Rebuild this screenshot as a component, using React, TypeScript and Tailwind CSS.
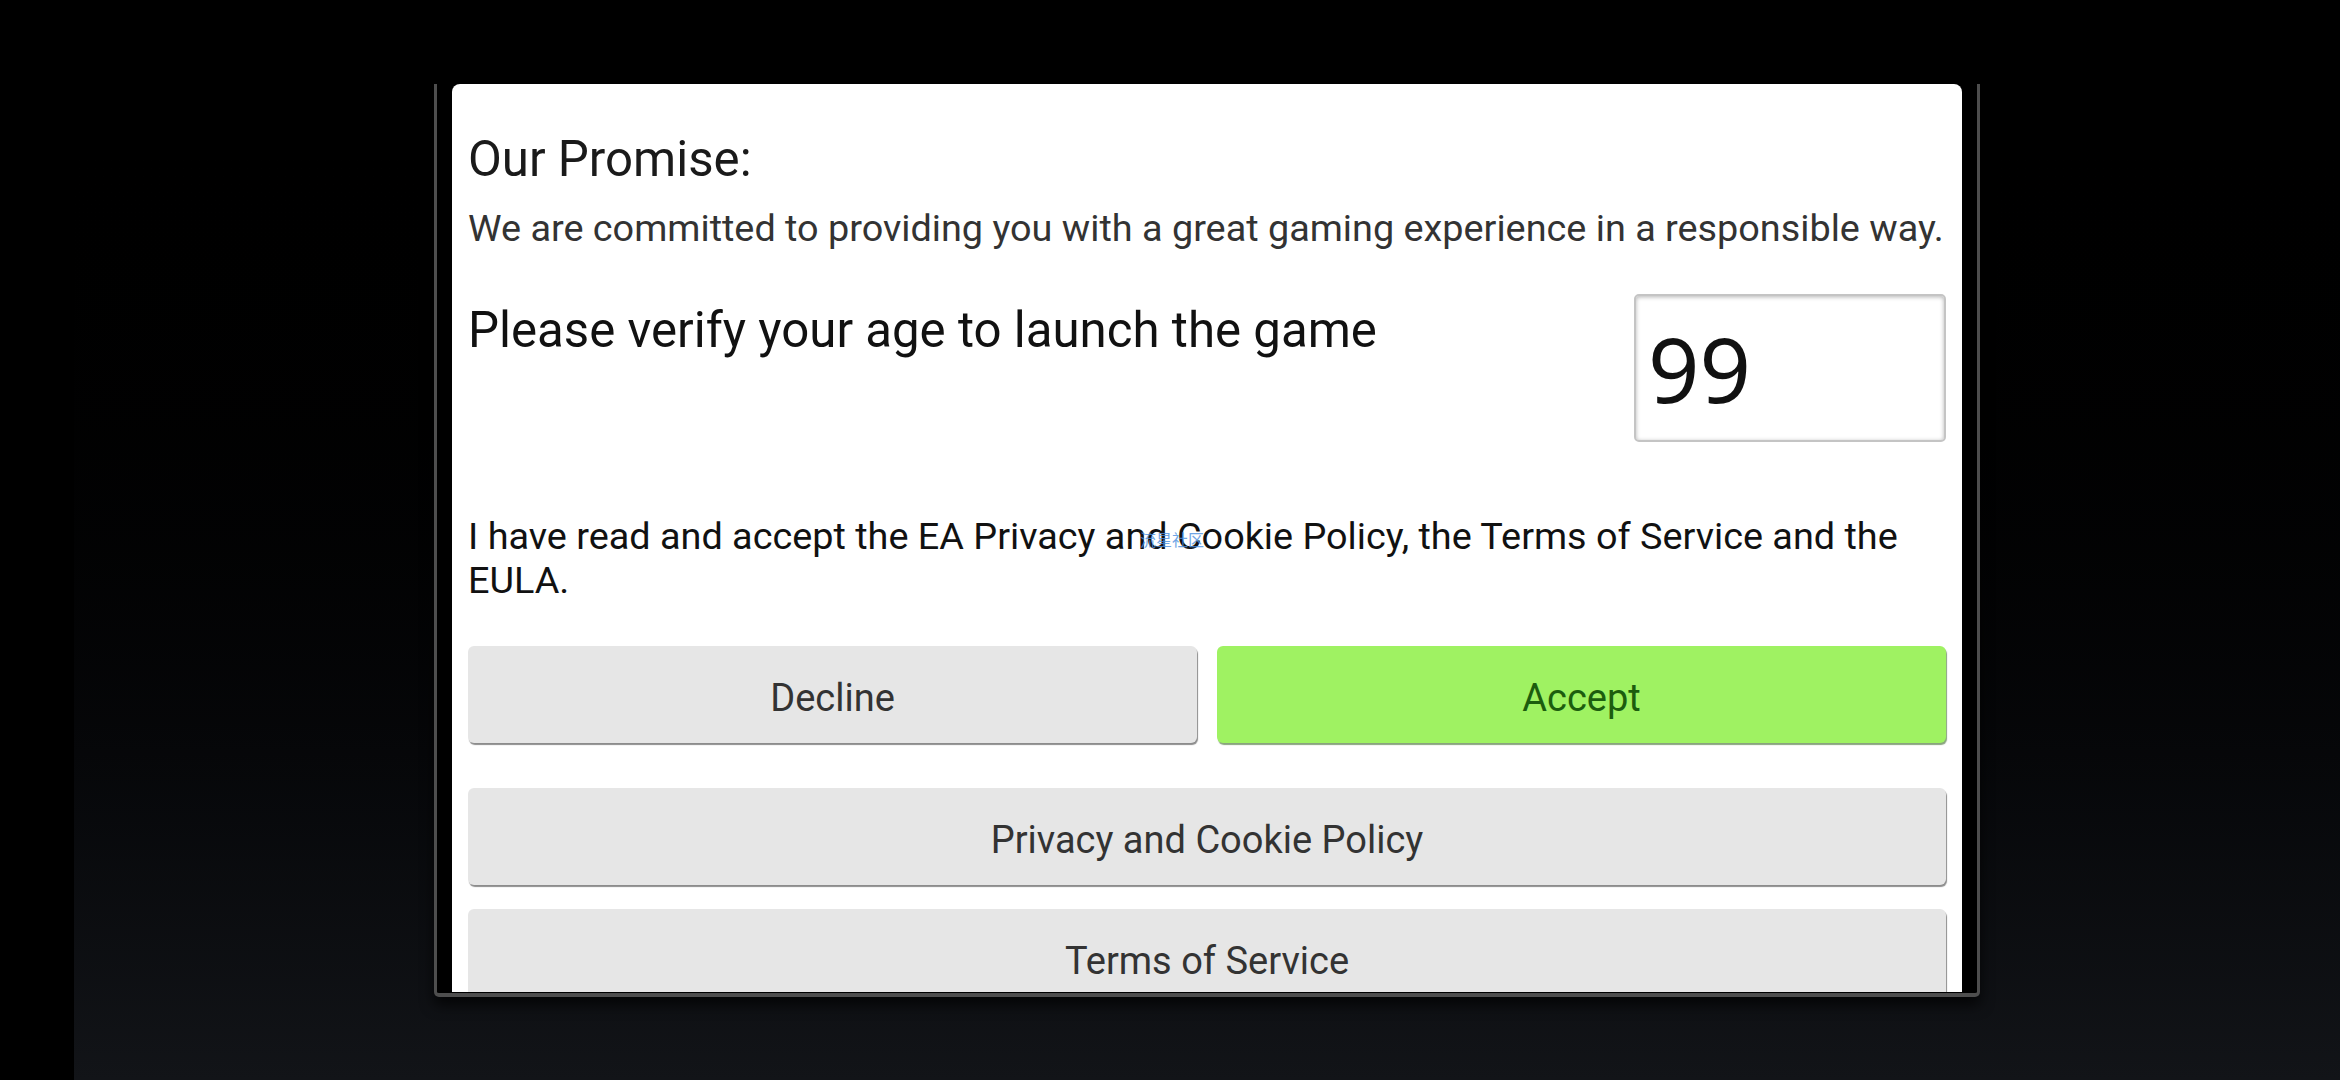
import type { ReactNode } from 'react';

const roboto = { fontFamily: 'Roboto, "Noto Sans", Arial, sans-serif' };

function GrayButton({ children, className = '' }: { children: ReactNode; className?: string }) {
  return (
    <button
      className={`h-[97px] w-full flex items-center justify-center pt-[8px] rounded-[6px] bg-[#e6e6e6] text-[#333333] text-[38px] shadow-[1px_2px_1px_rgba(0,0,0,0.45)] ${className}`}
    >
      {children}
    </button>
  );
}

export default function App() {
  return (
    <div className="w-[2340px] h-[1080px] flex bg-black overflow-hidden" style={roboto}>
      <div className="w-[74px] h-full bg-black" />

      <div className="flex-1 h-full flex justify-center pt-[84px] bg-linear-to-b from-black from-[8%] to-[#121418]">
        {/* Frame */}
        <div className="w-[1546px] h-[913px] bg-black border-x-[3px] border-b-[4px] border-[#4e4e4e] rounded-b-[5px] px-[15px] shadow-[0_8px_14px_rgba(0,0,0,0.7)]">
          <div className="relative h-[908px] bg-white rounded-t-[8px] overflow-hidden px-[16px] pt-[47px] shadow-[0_0_2px_rgba(0,0,0,0.5)]">
            <h1 className="text-[49.2px] leading-[56px] text-[#1a1a1a]">Our Promise:</h1>
            <p className="mt-[21px] text-[37.8px] leading-[40px] text-[#333333] whitespace-nowrap">
              We are committed to providing you with a great gaming experience in a responsible way.
            </p>

            <div className="mt-[46px] flex items-start justify-between">
              <h2 className="mt-[8px] text-[49.2px] leading-[56px] text-[#111111]">
                Please verify your age to launch the game
              </h2>
              <div className="w-[312px] h-[148px] flex items-center rounded-[5px] border-2 border-[#c4c4c4] bg-white px-[12px] shadow-[inset_0_1px_4px_rgba(0,0,0,0.3)]">
                <span
                  className="text-[90px] leading-[90px] text-[#111111]"
                  style={{ fontFamily: '"Noto Sans", "Open Sans", sans-serif' }}
                >
                  99
                </span>
              </div>
            </div>

            <p className="mt-[72px] text-[37.8px] leading-[44px] text-[#111111]">
              I have read and accept the EA Privacy and Cookie Policy, the Terms of Service and the EULA.
            </p>

            <div className="mt-[44px] grid grid-cols-2 gap-[20px]">
              <GrayButton>Decline</GrayButton>
              <button className="h-[97px] w-full flex items-center justify-center pt-[8px] rounded-[6px] bg-[#9ff262] text-[#1c5d0e] text-[38px] shadow-[1px_2px_1px_rgba(40,90,20,0.55)]">
                Accept
              </button>
            </div>

            <GrayButton className="mt-[45px]">Privacy and Cookie Policy</GrayButton>
            <GrayButton className="mt-[24px]">Terms of Service</GrayButton>

            {/* watermark */}
            <span
              className="absolute left-[688px] top-[447px] text-[16px] leading-[16px] text-[#4a8fe0] opacity-80"
              style={{ fontFamily: '"Noto Sans CJK SC", sans-serif' }}
            >
              流星社区
            </span>
          </div>
        </div>
      </div>
    </div>
  );
}
